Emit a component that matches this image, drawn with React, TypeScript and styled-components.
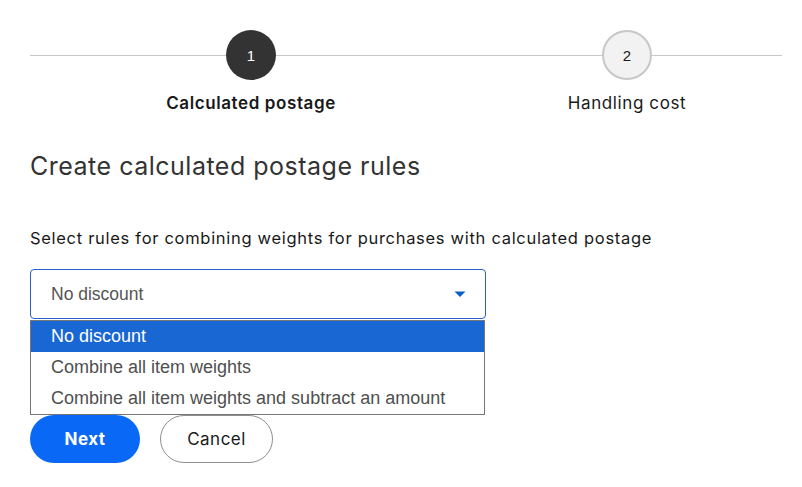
import styled, { createGlobalStyle } from 'styled-components'

const GlobalStyle = createGlobalStyle`
  body {
    margin: 0;
    background: #fff;
    font-family: Inter, 'Liberation Sans', Arial, sans-serif;
    color: #191919;
  }
`

const steps = [
  { n: 1, label: 'Calculated postage', active: true },
  { n: 2, label: 'Handling cost', active: false },
]

const options = ['No discount', 'Combine all item weights', 'Combine all item weights and subtract an amount']

const App = () => {
  return (
    <Page>
      <GlobalStyle />
      <Stepper>
        <Line />
        {steps.map((s) => (
          <Step key={s.n}>
            <Circle $active={s.active}>{s.n}</Circle>
            <StepLabel $active={s.active}>{s.label}</StepLabel>
          </Step>
        ))}
      </Stepper>

      <Title>Create calculated postage rules</Title>
      <Subtitle>Select rules for combining weights for purchases with calculated postage</Subtitle>

      <SelectWrap>
        <SelectBox>
          <span>No discount</span>
          <svg width="12" height="7" viewBox="0 0 12 7">
            <path d="M0.5 0.5 L11.5 0.5 L6 6 Z" fill="#0a5ec7" />
          </svg>
        </SelectBox>
        <OptionList>
          {options.map((o, i) => (
            <Option key={o} $selected={i === 0}>
              {o}
            </Option>
          ))}
        </OptionList>
      </SelectWrap>

      <Actions>
        <PrimaryButton>Next</PrimaryButton>
        <SecondaryButton>Cancel</SecondaryButton>
      </Actions>
    </Page>
  )
}

const Page = styled.main`
  padding: 30px 20px 20px 30px;
`
const Stepper = styled.div`
  position: relative;
  display: grid;
  grid-template-columns: 376px 376px;
  padding-left: 33px;
`
const Line = styled.div`
  position: absolute;
  left: 0;
  right: 0;
  top: 25px;
  height: 1px;
  background: #c7c7c7;
`
const Step = styled.div`
  position: relative;
  display: flex;
  flex-direction: column;
  align-items: center;
  gap: 12px;
`
const Circle = styled.div<{ $active: boolean }>`
  width: 50px;
  height: 50px;
  box-sizing: border-box;
  border-radius: 50%;
  display: flex;
  align-items: center;
  justify-content: center;
  font-size: 15px;
  font-family: 'Liberation Sans', Arial, sans-serif;
  background: ${(p) => (p.$active ? '#333333' : '#f2f2f2')};
  color: ${(p) => (p.$active ? '#ffffff' : '#191919')};
  border: ${(p) => (p.$active ? 'none' : '2px solid #c7c7c7')};
`
const StepLabel = styled.div<{ $active: boolean }>`
  font-size: 17px;
  line-height: 22px;
  letter-spacing: 0.6px;
  font-weight: ${(p) => (p.$active ? 600 : 400)};
  color: #191919;
`
const Title = styled.h1`
  margin: 36px 0 0;
  font-size: 25px;
  line-height: 32px;
  letter-spacing: 0.5px;
  font-weight: 400;
  color: #333;
`
const Subtitle = styled.p`
  margin: 44px 0 0;
  font-size: 16.5px;
  line-height: 24px;
  letter-spacing: 0.7px;
  color: #191919;
`
const SelectWrap = styled.div`
  position: relative;
  width: 456px;
  margin-top: 19px;
`
const SelectBox = styled.div`
  box-sizing: border-box;
  height: 50px;
  border: 1px solid #2a5fcf;
  border-radius: 4px;
  display: flex;
  align-items: center;
  justify-content: space-between;
  padding: 0 19px 0 20px;
  font-family: 'Liberation Sans', Arial, sans-serif;
  font-size: 17.5px;
  color: #555;
`
const OptionList = styled.ul`
  position: absolute;
  top: 51px;
  left: 0;
  width: 455px;
  box-sizing: border-box;
  margin: 0;
  padding: 0;
  list-style: none;
  border: 1px solid #767676;
  background: #fff;
  z-index: 2;
`
const Option = styled.li<{ $selected: boolean }>`
  height: 31px;
  display: flex;
  align-items: center;
  padding-left: 20px;
  font-family: 'Liberation Sans', Arial, sans-serif;
  font-size: 18px;
  background: ${(p) => (p.$selected ? '#1967d2' : '#fff')};
  color: ${(p) => (p.$selected ? '#fff' : '#4f4f4f')};
`
const Actions = styled.div`
  display: flex;
  gap: 20px;
  margin-top: 96px;
`
const PrimaryButton = styled.button`
  width: 110px;
  height: 48px;
  border-radius: 24px;
  border: none;
  background: #0968f6;
  color: #fff;
  font-family: inherit;
  font-size: 17px;
  letter-spacing: 0.5px;
  font-weight: 700;
`
const SecondaryButton = styled.button`
  width: 113px;
  height: 48px;
  border-radius: 24px;
  border: 1px solid #8f8f8f;
  background: #fff;
  color: #191919;
  font-family: inherit;
  font-size: 17px;
  letter-spacing: 0.5px;
`

export default App
